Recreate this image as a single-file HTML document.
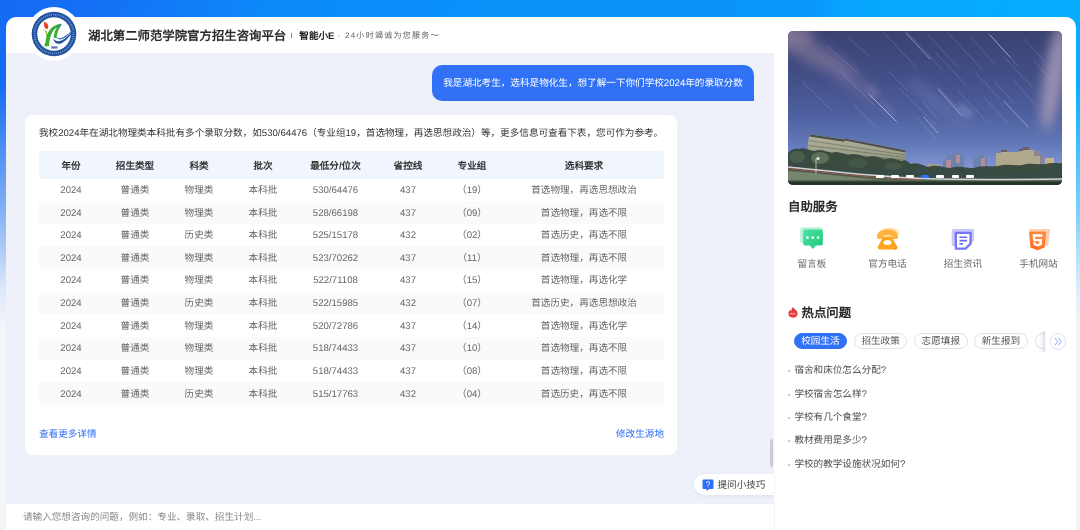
<!DOCTYPE html>
<html lang="zh-CN">
<head>
<meta charset="utf-8">
<title>湖北第二师范学院官方招生咨询平台</title>
<style>
*{box-sizing:border-box;margin:0;padding:0}
html,body{width:1080px;height:530px;overflow:hidden}
body{text-rendering:geometricPrecision;font-family:"Liberation Sans",sans-serif;font-size:9.6px;line-height:14px;color:#333;position:relative;
 background:linear-gradient(to bottom,rgba(243,245,249,0) 0px,rgba(243,245,249,0) 85px,rgba(243,245,249,.5) 212px,rgba(243,245,249,.9) 290px,rgba(243,245,249,1) 326px),linear-gradient(100deg,#166af3 0px,#1372f5 110px,#0c8af9 270px,#0a93fb 520px,#0a95fb 800px,#08a6fe 835px,#05aeff 1080px);}
.abs{position:absolute}
#card{left:6px;top:17px;width:1070px;height:530px;background:#fff;border-radius:10px}
#logo{left:26.7px;top:7.3px;width:54px;height:54px}
#title{left:88px;top:26px;height:20px;line-height:20px;font-size:12.4px;font-weight:bold;color:#2a2a2a;white-space:nowrap}
#sep{left:291.4px;top:32.5px;width:1px;height:5.5px;background:#888}
#sub1{left:299.3px;top:30px;height:14px;line-height:14px;font-size:9.6px;font-weight:900;color:#222;white-space:nowrap}
#sub2{left:337.5px;top:29.3px;height:14px;line-height:14px;font-size:8px;color:#5c5c5c;letter-spacing:1.27px;white-space:nowrap}
#chat{left:6px;top:53px;width:768px;height:450.5px;background:#eef1f9;overflow:hidden}
#bubble{left:432px;top:65px;width:322px;height:36px;padding-top:1.2px;background:#3071f6;border-radius:10px 10px 0 10px;color:#fff;font-size:9.6px;line-height:36px;text-align:center;white-space:nowrap}
#ans{left:25.3px;top:114.5px;width:652.2px;height:340.5px;background:#fff;border-radius:8px}
#intro{left:39px;top:126px;height:16px;line-height:16px;white-space:nowrap;color:#333}
#tbl{left:39px;top:151px;width:625px}
#tbl div{display:flex;white-space:nowrap;text-align:center}
#tbl span{display:block;flex:none;width:64px}
#tbl .c5{width:81px}#tbl .c8{width:160px}
.hr{height:27.5px;line-height:27.5px;background:#f0f5fe;border-radius:3px 3px 0 0;font-weight:bold;color:#333;padding-top:2.3px}
.r{height:22.65px;line-height:22.65px;color:#666;padding-top:1.4px}
.r.alt{background:#fafafa}
.lnk{color:#2d6ff7;font-size:9.6px;line-height:14px;white-space:nowrap}
#input{left:6px;top:503.5px;width:768px;height:27px;background:#fff}
#ph{left:23px;top:511px;line-height:14px;color:#888;white-space:nowrap}
#tip{left:694px;top:473.800px;width:80px;height:21.600px;background:#fff;border-radius:10.800px 0 0 10.800px;box-shadow:0 1px 4px rgba(90,110,170,.10)}
#side{left:774px;top:17px;width:302px;height:520px}
.svc{width:60px;text-align:center;color:#666;line-height:14px;top:258.3px;white-space:nowrap}
.tag{top:333px;height:16.4px;width:53.6px;border:1px solid #dde2ee;border-radius:8.2px;text-align:center;line-height:14.4px;padding-top:1.4px;color:#555;background:#fff;white-space:nowrap}
.dot{top:175px;width:7.800px;height:3.200px;border-radius:1px;background:#fff}
.q{left:794.4px;line-height:14px;color:#4d4d4d;white-space:nowrap}
.q:before{content:"";position:absolute;left:-6.5px;top:6px;width:2px;height:2px;border-radius:1px;background:#bbb}
</style>
</head>
<body>
<div id="root" class="abs" style="left:0;top:0;width:1080px;height:530px;overflow:hidden;will-change:transform">
<div id="card" class="abs"></div>
<div id="chat" class="abs"></div>
<!-- header -->
<svg id="logo" class="abs" viewBox="0 0 54 54">
 <circle cx="27" cy="27" r="27" fill="#fff"/>
 <circle cx="27" cy="27" r="22.3" fill="#1f51a0"/>
 <circle cx="27" cy="27" r="16.8" fill="#fff"/>
 <circle cx="27" cy="27" r="19.5" fill="none" stroke="#c9d8ef" stroke-width="1.7" stroke-dasharray="1.1 1.0" opacity=".5"/>
 <path d="M16.7 14.5 C19.6 15.8 21.6 17.6 21.400 19.600 C21.300 20.800 20.800 21.800 20.100 22.300 C18.400 21.800 17.300 20.200 17.100 18.400 C17 17 16.900 15.800 16.700 14.500Z" fill="#e8401c"/>
 <path d="M16.400 22.600 C18.600 23.200 20 24.800 20.600 27 C22.500 21.500 27.500 17.600 33.500 16.800 L34.600 17.800 C32 20.500 30.200 25.500 29.400 31.200 L26.600 30.400 C27.200 26 28.200 22.800 30 20.400 C25.500 22.600 22.600 29 22 39 L17.300 39.400 C18.400 35 19.400 31 19.600 28.200 C19 25.600 18 24 16.400 22.600Z" fill="#3aad2c"/>
 <path d="M16.400 22.600 C18.600 23.200 20 24.800 20.600 27 L19.600 28.200 C19 25.600 18 24 16.400 22.600Z" fill="#b4d334"/>
 <path d="M33.500 16.800 L34.600 17.800 C33.400 19 32.500 20.600 31.700 22.400 L30 20.400 C31 19 32.200 17.800 33.500 16.800Z" fill="#2a8fbf" opacity=".8"/>
 <path d="M26.200 31.500 C27.200 36.400 31 38 35 36 C40 33.400 44.600 27.600 47 21.800 C43 27.200 38.500 31.800 34.500 33.500 C31 34.900 28.200 33.900 26.200 31.500Z" fill="#1f51a0"/>
 <path d="M28.300 28.300 C29.600 31.600 33 32 36.500 30 C40 27.900 44 24.700 47 21.800 C44 25.700 40 29.600 36.500 31.600 C33 33.300 29.300 32.400 28.300 28.300Z" fill="#2b6ab8"/>
 <rect x="24.200" y="39.300" width="6.300" height="2.300" fill="#1f51a0" opacity=".75"/>
</svg>
<div id="title" class="abs">湖北第二师范学院官方招生咨询平台</div>
<div id="sep" class="abs"></div>
<div id="sub1" class="abs">智能小E</div>
<div id="sub2" class="abs">· 24小时竭诚为您服务～</div>

<!-- chat -->
<div id="bubble" class="abs">我是湖北考生，选科是物化生，想了解一下你们学校2024年的录取分数</div>
<div id="ans" class="abs"></div>
<div id="intro" class="abs">我校2024年在湖北物理类本科批有多个录取分数，如530/64476（专业组19，首选物理，再选思想政治）等，更多信息可查看下表，您可作为参考。</div>
<div id="tbl" class="abs">
<div class="hr"><span class="c1">年份</span><span class="c2">招生类型</span><span class="c3">科类</span><span class="c4">批次</span><span class="c5">最低分/位次</span><span class="c6">省控线</span><span class="c7">专业组</span><span class="c8">选科要求</span></div>
<div class="r"><span class="c1">2024</span><span class="c2">普通类</span><span class="c3">物理类</span><span class="c4">本科批</span><span class="c5">530/64476</span><span class="c6">437</span><span class="c7">（19）</span><span class="c8">首选物理，再选思想政治</span></div>
<div class="r alt"><span class="c1">2024</span><span class="c2">普通类</span><span class="c3">物理类</span><span class="c4">本科批</span><span class="c5">528/66198</span><span class="c6">437</span><span class="c7">（09）</span><span class="c8">首选物理，再选不限</span></div>
<div class="r"><span class="c1">2024</span><span class="c2">普通类</span><span class="c3">历史类</span><span class="c4">本科批</span><span class="c5">525/15178</span><span class="c6">432</span><span class="c7">（02）</span><span class="c8">首选历史，再选不限</span></div>
<div class="r alt"><span class="c1">2024</span><span class="c2">普通类</span><span class="c3">物理类</span><span class="c4">本科批</span><span class="c5">523/70262</span><span class="c6">437</span><span class="c7">（11）</span><span class="c8">首选物理，再选不限</span></div>
<div class="r"><span class="c1">2024</span><span class="c2">普通类</span><span class="c3">物理类</span><span class="c4">本科批</span><span class="c5">522/71108</span><span class="c6">437</span><span class="c7">（15）</span><span class="c8">首选物理，再选化学</span></div>
<div class="r alt"><span class="c1">2024</span><span class="c2">普通类</span><span class="c3">历史类</span><span class="c4">本科批</span><span class="c5">522/15985</span><span class="c6">432</span><span class="c7">（07）</span><span class="c8">首选历史，再选思想政治</span></div>
<div class="r"><span class="c1">2024</span><span class="c2">普通类</span><span class="c3">物理类</span><span class="c4">本科批</span><span class="c5">520/72786</span><span class="c6">437</span><span class="c7">（14）</span><span class="c8">首选物理，再选化学</span></div>
<div class="r alt"><span class="c1">2024</span><span class="c2">普通类</span><span class="c3">物理类</span><span class="c4">本科批</span><span class="c5">518/74433</span><span class="c6">437</span><span class="c7">（10）</span><span class="c8">首选物理，再选不限</span></div>
<div class="r"><span class="c1">2024</span><span class="c2">普通类</span><span class="c3">物理类</span><span class="c4">本科批</span><span class="c5">518/74433</span><span class="c6">437</span><span class="c7">（08）</span><span class="c8">首选物理，再选不限</span></div>
<div class="r alt"><span class="c1">2024</span><span class="c2">普通类</span><span class="c3">历史类</span><span class="c4">本科批</span><span class="c5">515/17763</span><span class="c6">432</span><span class="c7">（04）</span><span class="c8">首选历史，再选不限</span></div>
</div>
<div class="abs lnk" style="left:39px;top:428px">查看更多详情</div>
<div class="abs lnk" style="right:416px;top:428px">修改生源地</div>
<div class="abs" style="left:769.5px;top:439px;width:3.5px;height:28px;border-radius:2px;background:#c9cdd6"></div>
<div id="tip" class="abs"></div>
<svg class="abs" style="left:701.5px;top:478.5px;width:12px;height:12px" viewBox="0 0 12 12"><path d="M1.5 0.5h9a1 1 0 0 1 1 1v7.5a1 1 0 0 1-1 1H7l-1.6 1.8L3.8 10H1.5a1 1 0 0 1-1-1V1.5a1 1 0 0 1 1-1Z" fill="#2d6ff7"/><text x="6" y="8" font-size="8.2" fill="#fff" text-anchor="middle" font-family="Liberation Sans, sans-serif">?</text></svg>
<div class="abs" style="left:717.5px;top:478.7px;line-height:14px;font-size:9.6px;color:#444;white-space:nowrap">提问小技巧</div>
<div id="input" class="abs"></div>
<div class="abs" style="left:774px;top:503px;width:1px;height:27px;background:#edf0f5"></div>
<div id="ph" class="abs">请输入您想咨询的问题，例如：专业、录取、招生计划...</div>

<!-- sidebar -->
<svg id="photo" class="abs" style="left:788px;top:31px;width:274px;height:154px;border-radius:5px" viewBox="0 0 274 154" preserveAspectRatio="none">
 <defs>
  <linearGradient id="sky" x1="0" y1="0" x2="0" y2="1">
   <stop offset="0" stop-color="#3b4272"/><stop offset=".3" stop-color="#424f88"/><stop offset=".55" stop-color="#4e609f"/><stop offset=".75" stop-color="#657bbb"/><stop offset=".88" stop-color="#8094d0"/><stop offset="1" stop-color="#8b9bd5"/>
  </linearGradient>
  <linearGradient id="bld" x1="0" y1="0" x2="0" y2="1"><stop offset="0" stop-color="#b3b29b"/><stop offset="1" stop-color="#8c917c"/></linearGradient>
  <filter id="b6" x="-50%" y="-50%" width="200%" height="200%"><feGaussianBlur stdDeviation="6"/></filter>
  <filter id="b3" x="-50%" y="-50%" width="200%" height="200%"><feGaussianBlur stdDeviation="3"/></filter>
  <filter id="b0" x="-20%" y="-20%" width="140%" height="140%"><feGaussianBlur stdDeviation=".35"/></filter>
  <filter id="b1" x="-20%" y="-20%" width="140%" height="140%"><feGaussianBlur stdDeviation=".7"/></filter>
 </defs>
 <rect width="274" height="154" fill="url(#sky)"/>
 <!-- clouds -->
 <g filter="url(#b6)">
  <ellipse cx="24" cy="22" rx="48" ry="11" fill="#7a7196" opacity=".75" transform="rotate(28 24 22)"/>
  <ellipse cx="64" cy="50" rx="36" ry="8" fill="#716d9e" opacity=".6" transform="rotate(36 64 50)"/>
  <ellipse cx="266" cy="46" rx="10" ry="54" fill="#a99bb9" opacity=".85" transform="rotate(9 266 46)"/>
  <ellipse cx="150" cy="72" rx="40" ry="7" fill="#6b79b6" opacity=".45" transform="rotate(38 150 72)"/>
  <ellipse cx="0" cy="4" rx="26" ry="12" fill="#8a7c9c" opacity=".7"/>
 </g>
 <g filter="url(#b3)">
  <ellipse cx="178" cy="80" rx="10" ry="3.500" fill="#8f98cc" opacity=".6" transform="rotate(40 178 80)"/>
  <ellipse cx="100" cy="78" rx="9" ry="3" fill="#8088c0" opacity=".5" transform="rotate(40 100 78)"/>
  <ellipse cx="84" cy="60" rx="8" ry="3" fill="#8a84b4" opacity=".5" transform="rotate(40 84 60)"/>
 </g>
 <!-- star trails -->
 <g stroke="#d6defa" stroke-width=".7" stroke-linecap="round" opacity=".26" filter="url(#b0)">
  <path d="M96 2l32 34M118 0l36 38M140 4l30 32M160 2l34 36M182 6l26 28M200 2l30 33M80 62l30 30M112 58l36 36M150 56l28 30M170 60l30 32M196 66l24 26M40 16l30 26M52 40l34 34M66 74l22 22M216 26l28 30M226 50l22 24M236 8l20 22M128 86l20 22M100 40l20 20M14 50l30 30M148 22l30 32M186 40l26 28M206 50l20 22M60 6l22 20M246 30l16 18M134 70l16 18"/>
 </g>
 <g stroke="#ffffff" stroke-width=".8" stroke-linecap="round" opacity=".5" filter="url(#b0)">
  <path d="M82 64l26 26M150 58l24 27M118 2l24 26M202 4l20 22M136 86l14 16M216 70l24 26"/>
 </g>
 <!-- left building -->
 <path d="M20 112 L21.500 103.300 L56 108.600 L57 107.400 L117.600 119.600 L117.600 138 L18 138Z" fill="url(#bld)"/>
 <path d="M21.500 103.300 L56 108.600 L57 107.400 L117.600 119.600 L117.600 121.400 L57 109.600 L56 110.800 L21.300 105.500Z" fill="#4c4f49"/>
 <g stroke="#62665a" stroke-width=".8" opacity=".75"><path d="M21 109.500l96.600 14.500M20.600 114.500l97 12M20.300 119.500l97.300 9.500M20 124.500l97.600 7"/></g>
 <!-- mid + right buildings -->
 <path d="M155 141v-13h4v-5h8v-2h5v3h4v17zM185 141v-15h5v-2h6v3h3v14z" fill="#6d83ad"/>
 <path d="M158 129h5v11h-5zM168 124h4v8h-4zM193 127h4v12h-4z" fill="#b28f9f"/>
 <path d="M140 133h12v8h-12z" fill="#a59f8d"/>
 <path d="M208 141v-19h5v-3h6v2h12v-3h4v-2h6v3h5v4h6v3h4v15z" fill="#b0a98e"/>
 <path d="M213 119h6v2h-6zM235 116h6v3h-6zM231 118h4v2h-4z" fill="#6a5f63"/>
 <path d="M246 120h6v5h-6zM252 124h4v14h-4z" fill="#8c8592"/>
 <path d="M257 127h9v12h-9z" fill="#c2b48a"/>
 <!-- trees -->
 <g filter="url(#b1)">
 <path d="M0 122 C4 117 9 118 13 117.500 C18 116 22 120 27 120 C33 117.500 38 121 44 122 C50 119 55 123 60 124 C67 121 73 125 79 126 C86 124 92 127 97 128 C103 126 109 129 114 130 C117 128 120 131 123 133 C128 131 134 134 140 136 C147 133 155 136 162 137 C170 134 178 137 186 137 C194 134 202 136 210 135 C218 132 226 135 234 134 C242 131 250 134 258 133 C264 131 270 133 274 132 L274 154 L0 154Z" fill="#33453a" opacity=".93"/>
 <ellipse cx="32" cy="127" rx="9" ry="6" fill="#7f9372" opacity=".5"/>
 <ellipse cx="9" cy="126" rx="8" ry="6" fill="#566f50" opacity=".55"/>
 <ellipse cx="70" cy="132" rx="10" ry="5" fill="#55684e" opacity=".45"/>
 <ellipse cx="105" cy="135" rx="9" ry="4" fill="#5a6c52" opacity=".4"/>
 </g>
 <!-- ground + light trails -->
 <path d="M0 139 C40 143 90 148 134 149 L274 149 L274 154 L0 154Z" fill="#55644f"/>
 <path d="M0 140 C30 142 60 146 90 149 L0 149Z" fill="#8b9a80" opacity=".6"/>
 <path d="M0 136 C40 140 90 146 134 147.500 C180 149 230 148.500 274 148" fill="none" stroke="#eeecef" stroke-width="1.500" opacity=".85"/>
 <path d="M0 137.800 C40 141.800 90 147.500 134 148.800" fill="none" stroke="#d8645c" stroke-width=".8" opacity=".8"/>
 <rect x="0" y="150.500" width="274" height="3.500" fill="#243528"/>
 <path d="M28 128v15" stroke="#e8efe0" stroke-width=".8" opacity=".8"/><circle cx="30" cy="127.500" r="1.600" fill="#f4f8ee" opacity=".9"/>
</svg>

<!-- carousel dots -->
<div class="abs dot" style="left:876px"></div><div class="abs dot" style="left:891px"></div><div class="abs dot" style="left:906px"></div><div class="abs dot" style="left:921px;background:#2d6ff7"></div><div class="abs dot" style="left:936.4px"></div><div class="abs dot" style="left:951.6px"></div><div class="abs dot" style="left:966.3px"></div>
<!-- service icons -->
<svg class="abs" style="left:799px;top:226px;width:26px;height:26px" viewBox="0 0 26 26">
 <defs><linearGradient id="g1" x1="0" y1="0" x2="1" y2="1"><stop offset="0" stop-color="#4ae3a4"/><stop offset="1" stop-color="#1fc777"/></linearGradient></defs>
 <rect x="1.2" y="1.3" width="22.6" height="15.8" rx="2" fill="#8be9c2" opacity=".6"/>
 <path d="M6 3.6h16a1.8 1.8 0 0 1 1.8 1.8v12.4a1.8 1.8 0 0 1-1.8 1.8h-5.2l-3 3.5-3-3.5H6a1.8 1.8 0 0 1-1.8-1.8V5.4A1.8 1.8 0 0 1 6 3.6Z" fill="url(#g1)"/>
 <circle cx="8.4" cy="11.6" r="1.35" fill="#fff"/><circle cx="13.8" cy="11.6" r="1.35" fill="#fff"/><circle cx="19.1" cy="11.6" r="1.35" fill="#fff"/>
</svg>
<svg class="abs" style="left:875px;top:226px;width:26px;height:26px" viewBox="0 0 26 26">
 <ellipse cx="14.5" cy="7" rx="9.5" ry="5.6" fill="#ffd9a0" opacity=".8"/>
 <path d="M2 10.2C2 5.6 7 3.6 12.5 3.6S23 5.6 23 10.2v1.2c0 1-.8 1.6-1.8 1.6h-3c-.9 0-1.6-.6-1.6-1.5V9.6c-1.2-.5-2.6-.7-4.1-.7s-2.900.2-4.100.7v1.900c0 .9-.7 1.500-1.600 1.500h-3C2.800 13 2 12.400 2 11.400Z" fill="#ffb340"/>
 <path d="M9.400 10.800h6.200c.7 0 1.300.4 1.600 1l4.800 8.400c.8 1.500-.2 3.400-2 3.400H5c-1.800 0-2.800-1.900-2-3.400l4.800-8.400c.3-.6.900-1 1.600-1Z" fill="#ffa41f"/>
 <path d="M18 23.600l4-3.400c.8 1.500-.2 3.400-2 3.400Z" fill="#ff8a14"/>
 <ellipse cx="12.500" cy="16.400" rx="3.900" ry="2.500" fill="#fff"/>
</svg>
<svg class="abs" style="left:950px;top:226px;width:26px;height:26px" viewBox="0 0 26 26">
 <path d="M3.600 2.900h20.400v11.500l-5.400 5.500H1.700V4.800a1.900 1.900 0 0 1 1.900-1.900Z" fill="#b3b6fb" opacity=".75"/>
 <path d="M4.700 6.900A1.100 1.100 0 0 1 5.800 5.800h15.900v12.400l-5.600 5.600H5.800a1.100 1.100 0 0 1-1.100-1.100Z" fill="#7276f6"/>
 <path d="M7 8.100h12.400v9.200l-4.300 4.300H7Z" fill="#fff"/>
 <path d="M9.400 10.400h7.700v1.700H9.400zM9.400 13.700h7.700v1.700H9.400zM9.400 17h3.500v1.700H9.400z" fill="#6b6ff5"/>
</svg>
<svg class="abs" style="left:1026px;top:226px;width:26px;height:26px" viewBox="0 0 26 26">
 <defs><linearGradient id="g4" x1="0" y1="0" x2="0" y2="1"><stop offset="0" stop-color="#ff8a3d"/><stop offset="1" stop-color="#ff6a1a"/></linearGradient></defs>
 <path d="M2.300 2.900h22l-2.100 16.700-6.500 2Z" fill="#ffc3a0" opacity=".8"/>
 <path d="M2.900 5.400h17.200l-1.600 16.200-7 2.700-7-2.700Z" fill="url(#g4)"/>
 <path d="M11.500 7.400h6.600l-1.300 12.800-5.300 2Z" fill="#ff8f4d" opacity=".6"/>
 <path d="M6.600 8.300h10l-.25 2.400H9.200l.2 2.300h6.700l-.6 6-4 1.500-4-1.500-.25-2.900h2.400l.1 1.300 1.750.6 1.750-.6.2-2.100H7.100Z" fill="#fff"/>
</svg>
<!-- flame -->
<svg class="abs" style="left:787.900px;top:307px;width:10px;height:10.700px" viewBox="0 0 10 10.700">
 <path d="M5.100 0 C5.500 1.500 7.500 2.500 8.700 4 C10.400 6.200 9.700 9.200 7.200 10.200 C5.900 10.800 4.100 10.800 2.800 10.200 C0.300 9.200 -0.400 6.200 1.300 4 C1.700 3.500 2.200 3 2.600 2.600 C2.700 3.300 3.100 3.800 3.700 4 C3.400 2.500 3.900 1 5.100 0Z" fill="#e73a38"/>
 <path d="M2.300 5.900h.5v.6h.6v-.6h.5v1.700h-.5v-.6h-.6v.6h-.5zM4.400 6.750a.75.85 0 1 1 1.500 0a.75.85 0 1 1-1.500 0zM6.200 5.900h1.600v.45h-.55v1.250h-.5v-1.250h-.55z" fill="#fff" opacity=".9"/>
</svg>
<!-- 5th partial tag, fade, next button -->
<div class="abs" style="left:1034.600px;top:333px;width:10px;height:16.4px;border:1px solid #dde2ee;border-right:none;border-radius:8.2px 0 0 8.2px;background:#fff"></div>
<div class="abs" style="left:1039px;top:331px;width:6px;height:21px;background:linear-gradient(to right,rgba(120,125,140,0),rgba(120,125,140,.08) 55%,rgba(120,125,140,.26))"></div><div class="abs" style="left:1045px;top:330px;width:5px;height:23px;background:#fff"></div>

<div class="abs" style="left:1049.800px;top:333.200px;width:16.400px;height:16.400px;border:1px solid #dde3f6;border-radius:8.2px;background:#fff"></div>
<svg class="abs" style="left:1054.2px;top:337.100px;width:8px;height:9px" viewBox="0 0 8 9"><path d="M0.800 0.600l2.900 3.900-2.900 3.900M4.200 0.600l2.900 3.900-2.900 3.900" fill="none" stroke="#7a98f6" stroke-width=".85"/></svg>
<div class="abs" style="left:788px;top:199px;line-height:16px;font-size:12.4px;font-weight:bold;color:#2a2a2a;white-space:nowrap">自助服务</div>
<div class="abs svc" style="left:782px">留言板</div>
<div class="abs svc" style="left:857.5px">官方电话</div>
<div class="abs svc" style="left:933px">招生资讯</div>
<div class="abs svc" style="left:1008.5px">手机网站</div>
<div class="abs" style="left:801.5px;top:304.5px;line-height:16px;font-size:12.4px;font-weight:bold;color:#2a2a2a;white-space:nowrap">热点问题</div>
<div class="abs tag" style="left:793.6px;background:#3071f6;border-color:#3071f6;color:#fff">校园生活</div>
<div class="abs tag" style="left:853.8px">招生政策</div>
<div class="abs tag" style="left:914px">志愿填报</div>
<div class="abs tag" style="left:974.1px">新生报到</div>
<div class="abs q" style="top:364.3px">宿舍和床位怎么分配?</div>
<div class="abs q" style="top:387.7px">学校宿舍怎么样?</div>
<div class="abs q" style="top:411.1px">学校有几个食堂?</div>
<div class="abs q" style="top:434.4px">教材费用是多少?</div>
<div class="abs q" style="top:457.9px">学校的教学设施状况如何?</div>
</div>
</body>
</html>
